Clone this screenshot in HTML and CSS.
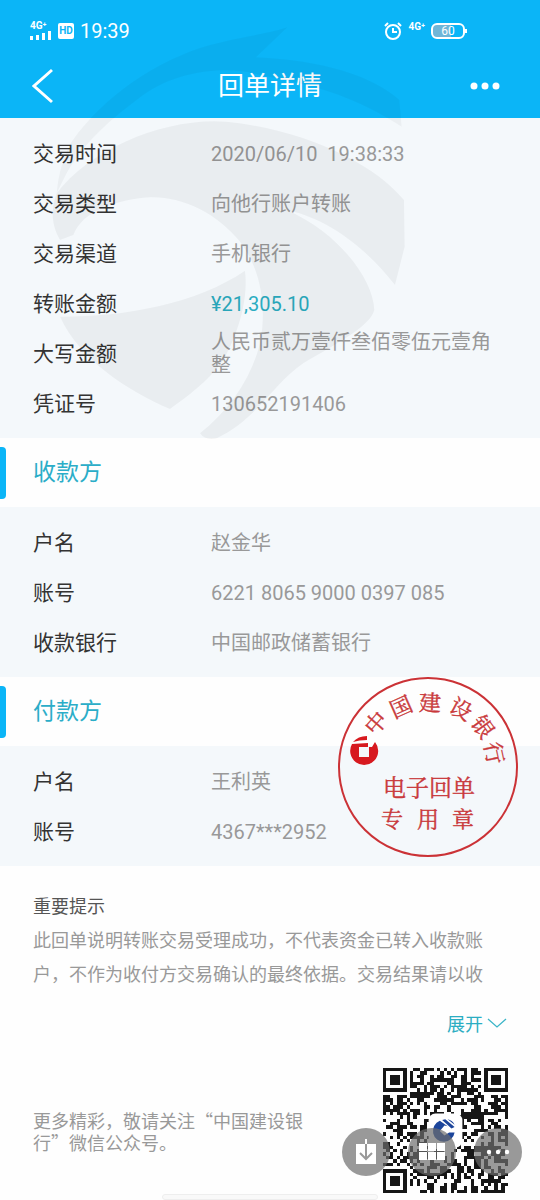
FILE: index.html
```
<!DOCTYPE html>
<html lang="zh-CN">
<head>
    <meta charset="UTF-8">
    <meta name="viewport" content="width=device-width, initial-scale=1.0">
    <title>回单详情</title>
    <link rel="stylesheet" href="styles.css">
</head>
<body>
    <div class="page">
        <header class="header">
            <div class="status">
                <div class="status-left">
                    <div class="signal">
                        <span class="net">4G⁺</span>
                        <svg width="22" height="10" viewBox="0 0 22 10" fill="#fff"><path d="M0 5h3v4H0zM6 4h3v5H6zM12 2h3v7h-3zM18 0h3v9h-3z"/></svg>
                    </div>
                    <span class="hd">HD</span>
                    <span class="time">19:39</span>
                </div>
                <div class="status-right">
                    <svg width="18" height="18" viewBox="0 0 18 18" fill="none" stroke="#fff" stroke-width="2"><circle cx="9" cy="10" r="7"/><path d="M9 6v4h4M1 4l3-3M17 4l-3-3"/></svg>
                    <span class="net">4G⁺</span>
                    <span class="battery">60</span>
                </div>
            </div>
            <nav class="nav">
                <button class="nav-btn" aria-label="返回">
                    <svg width="22" height="36" viewBox="0 0 22 36" fill="none" stroke="#fff" stroke-width="3"><path d="M20 2L2 18l18 16"/></svg>
                </button>
                <h1>回单详情</h1>
                <button class="nav-btn" aria-label="更多">
                    <svg width="30" height="8" viewBox="0 0 30 8" fill="#fff"><circle cx="4" cy="4" r="3.5"/><circle cx="15" cy="4" r="3.5"/><circle cx="26" cy="4" r="3.5"/></svg>
                </button>
            </nav>
        </header>

        <main>
            <dl class="group">
                <div class="row"><dt>交易时间</dt><dd>2020/06/10&nbsp; 19:38:33</dd></div>
                <div class="row"><dt>交易类型</dt><dd>向他行账户转账</dd></div>
                <div class="row"><dt>交易渠道</dt><dd>手机银行</dd></div>
                <div class="row"><dt>转账金额</dt><dd class="amount">¥21,305.10</dd></div>
                <div class="row"><dt>大写金额</dt><dd>人民币贰万壹仟叁佰零伍元壹角整</dd></div>
                <div class="row"><dt>凭证号</dt><dd>130652191406</dd></div>
            </dl>

            <section>
                <h2>收款方</h2>
                <dl class="group">
                    <div class="row"><dt>户名</dt><dd>赵金华</dd></div>
                    <div class="row"><dt>账号</dt><dd>6221 8065 9000 0397 085</dd></div>
                    <div class="row"><dt>收款银行</dt><dd>中国邮政储蓄银行</dd></div>
                </dl>
            </section>

            <section class="payer">
                <h2>付款方</h2>
                <dl class="group">
                    <div class="row"><dt>户名</dt><dd>王利英</dd></div>
                    <div class="row"><dt>账号</dt><dd>4367***2952</dd></div>
                </dl>
                <svg class="seal" viewBox="0 0 180 180">
                    <circle cx="90" cy="90" r="89" fill="none" stroke="#cb3236" stroke-width="2"/>
                    <g transform="translate(26 74)" fill="#d7191f">
                        <path fill-rule="evenodd" d="M-12 -7L4 -8V-4H8L11 -9A14 14 0 1 1 -12 -7ZM-5 -4V6H5V-4Z"/>
                        <path d="M-11 -9Q-6 -15 3 -15V-11Q-5 -11 -11 -9Z"/>
                    </g>
                    <g class="seal-text">
                        <text transform="translate(38 46) rotate(-49)" y="8">中</text>
                        <text transform="translate(63 30) rotate(-24)" y="8">国</text>
                        <text transform="translate(92 26) rotate(2)" y="8">建</text>
                        <text transform="translate(123 32) rotate(28)" y="8">设</text>
                        <text transform="translate(145 50) rotate(54)" y="8">银</text>
                        <text transform="translate(156 76) rotate(78)" y="8">行</text>
                        <text class="seal-big" x="91" y="119">电子回单</text>
                        <text x="54" y="150">专</text>
                        <text x="90" y="150">用</text>
                        <text x="125" y="150">章</text>
                    </g>
                </svg>
            </section>

            <section class="notice">
                <h3>重要提示</h3>
                <p>此回单说明转账交易受理成功，不代表资金已转入收款账户，不作为收付方交易确认的最终依据。交易结果请以收</p>
                <button class="expand">展开
                    <svg width="20" height="10" viewBox="0 0 20 10" fill="none" stroke="#3bb5c8" stroke-width="1.3"><path d="M1 1l9 8 9-8"/></svg>
                </button>
            </section>
        </main>

        <footer class="footer">
            <p>更多精彩，敬请关注“中国建设银行”微信公众号。</p>
            <svg class="qr" viewBox="0 0 37 37">
                <path id="qr-dots" fill="#161616" shape-rendering="crispEdges"/>
                <rect x="13.5" y="13.5" width="10" height="10" rx="2" fill="#fff"/>
                <g transform="translate(18.2 18.4) scale(.23)" fill="#1c459b">
                    <path d="M-6 -12L4 -5L0 -6L-6 1L0 7L6 3H13A14 14 0 1 1 -6 -12Z"/>
                    <path d="M-3 -13L1 -14L13 -4L9 -2ZM4 -14Q10 -13 13 -7Z"/>
                </g>
            </svg>
            <div class="float">
                <button aria-label="下载">
                    <svg width="22" height="28" viewBox="0 0 22 28"><path fill="#fff" d="M1 6h20v20H1zM10 1h2v6h-2z"/><path fill="none" stroke="#999" stroke-width="2" d="M11 6v14M5 15l6 6 6-6"/></svg>
                </button>
                <button aria-label="宫格">
                    <svg width="26" height="18" viewBox="0 0 26 18" fill="#fff"><path d="M0 0h8v8H0zM9 0h8v8H9zM18 0h8v8h-8zM0 9h8v8H0zM9 9h8v8H9zM18 9h8v8h-8z"/></svg>
                </button>
                <button aria-label="更多操作">
                    <svg width="24" height="6" viewBox="0 0 24 6" fill="#fff"><circle cx="3" cy="3" r="2.2"/><circle cx="12" cy="3" r="2.2"/><circle cx="21" cy="3" r="2.2"/></svg>
                </button>
            </div>
            <span class="home-bar"></span>
        </footer>

        <svg class="watermark" viewBox="0 0 1200 1290" fill="#000">
            <path fill-opacity=".035" d="M95 365C190 230 350 120 510 75C600 50 670 45 742 22L648 112C850 120 1000 170 1078 240L1085 320C950 235 850 200 660 165C560 135 400 150 290 240C210 300 130 370 80 460L50 520C55 460 70 410 95 365Z"/>
            <path fill-opacity=".045" d="M50 520C150 385 380 290 560 305C800 330 1000 430 1092 540L1094 680L1065 795C990 700 880 600 740 570C900 640 1000 780 1003 870C990 920 890 970 790 1030C700 1090 650 1200 530 1255Q495 1262 480 1240C580 1160 640 1060 662 960C680 850 660 745 600 665C530 580 430 530 330 532C230 540 130 570 100 645L60 660C30 610 35 560 50 520Z"/>
            <path fill-opacity=".045" d="M60 890C260 890 470 850 615 752C625 830 600 930 550 1020C500 1090 440 1130 390 1167C260 1110 120 1020 60 890Z"/>
        </svg>
    </div>
    <script src="script.js"></script>
</body>
</html>
```
FILE: styles.css
```
* {
    box-sizing: border-box;
}
body {
    margin: 0;
    background: #fefefe;
    color: #333;
    font-family: Roboto, "Noto Sans CJK SC", sans-serif;
}
h1, h2, h3, p, dl, dd {
    margin: 0;
    font-weight: 400;
}
button {
    border: none;
    background: none;
    padding: 0;
    font-family: inherit;
}
.page {
    position: relative;
    overflow: hidden;
}
.header {
    background: #0bb5f7;
    color: #fff;
    height: 118px;
}
.status {
    display: flex;
    justify-content: space-between;
    align-items: center;
    height: 62px;
    padding: 0 75px 0 30px;
}
.status-left, .status-right {
    display: flex;
    align-items: center;
    gap: 6px;
}
.signal {
    display: flex;
    flex-direction: column;
}
.net {
    font-size: 10px;
    line-height: 10px;
    font-weight: 700;
}
.status-right .net {
    padding-bottom: 8px;
}
.hd {
    background: #fff;
    color: #0bb5f7;
    font-size: 10px;
    font-weight: 700;
    line-height: 16px;
    width: 16px;
    text-align: center;
    border-radius: 2px;
}
.time {
    font-size: 20px;
}
.battery {
    position: relative;
    width: 34px;
    border: 2px solid #fff;
    border-radius: 6px;
    font-size: 12px;
    line-height: 12px;
    text-align: center;
    background: linear-gradient(to right, #6fb6d8 60%, transparent 60%);
}
.battery::after {
    content: "";
    position: absolute;
    right: -4px;
    top: 4px;
    width: 2px;
    height: 4px;
    background: #fff;
}
.nav {
    display: flex;
    justify-content: space-between;
    align-items: center;
    height: 48px;
    padding: 0 32px;
}
.nav-btn {
    display: flex;
    width: 38px;
}
h1 {
    font-size: 26px;
    line-height: 36px;
}
.group {
    background: #f4f8fb;
    padding: 11px 33px 9px;
}
.row {
    display: flex;
    align-items: center;
    height: 50px;
}
dt {
    width: 178px;
    flex: none;
    font-size: 21px;
    line-height: 23px;
}
dd {
    font-size: 20px;
    line-height: 23px;
    color: #999;
}
.amount {
    color: #2badc2;
}
h2 {
    display: flex;
    align-items: center;
    height: 69px;
    font-size: 23px;
    line-height: 23px;
    color: #2badc8;
}
h2::before {
    content: "";
    width: 6px;
    height: 52px;
    margin-right: 27px;
    background: #0bb5f7;
    border-radius: 0 4px 4px 0;
}
.payer {
    position: relative;
}
.seal {
    position: absolute;
    top: 0;
    right: 22px;
    width: 180px;
    height: 180px;
}
.seal-text {
    fill: #c9393b;
    stroke: #c9393b;
    stroke-width: .4px;
    font-family: "Noto Serif CJK SC", "Noto Sans CJK SC", serif;
    font-size: 22px;
    text-anchor: middle;
}
.seal-big {
    font-size: 23px;
}
.notice {
    padding: 22px 33px 0;
    display: flex;
    flex-direction: column;
    font-size: 18px;
    font-family: "Noto Sans CJK SC", sans-serif;
}
h3 {
    font-size: 18px;
    line-height: 34px;
    color: #555;
}
.notice p {
    padding-right: 12px;
    line-height: 34px;
    color: #999;
}
.expand {
    display: flex;
    align-items: center;
    align-self: flex-end;
    gap: 4px;
    margin-top: 16px;
    font-size: 18px;
    line-height: 34px;
    color: #2badc2;
}
.footer {
    position: relative;
    display: flex;
    justify-content: space-between;
    align-items: center;
    padding: 28px 32px 7px 33px;
    font-family: "Noto Sans CJK SC", sans-serif;
}
.footer p {
    max-width: 280px;
    font-size: 18px;
    line-height: 22px;
    color: #999;
}
.qr {
    width: 125px;
    height: 125px;
}
.float {
    position: absolute;
    right: 18px;
    bottom: 24px;
    display: flex;
    gap: 18px;
}
.float button {
    display: flex;
    align-items: center;
    justify-content: center;
    width: 48px;
    height: 48px;
    border-radius: 50%;
    background: rgba(110, 110, 110, .7);
}
.home-bar {
    position: absolute;
    left: 30%;
    right: 30%;
    bottom: 0;
    height: 6px;
    border: 1px solid #eee;
    border-radius: 3px;
    background: #f9f9f9;
}
.watermark {
    position: absolute;
    top: 20px;
    left: 40px;
    width: 400px;
    height: 430px;
    pointer-events: none;
}
```
FILE: script.js
```
const size = 37;
let seed = 20200610;
let d = '';

function random() {
    seed = (seed * 1103515245 + 12345) % 2147483648;
    return seed / 2147483648;
}

// corner squares, null outside of them
function finder(x, y) {
    const corners = [[0, 0], [size - 7, 0], [0, size - 7]];
    for (const [cx, cy] of corners) {
        const r = Math.max(Math.abs(x - cx - 3), Math.abs(y - cy - 3));
        if (r <= 4) return r !== 4 && r !== 2;
    }
    return null;
}

for (let y = 0; y < size; y++) {
    for (let x = 0; x < size; x++) {
        const corner = finder(x, y);
        const dark = random() < 0.52;
        if (corner === null ? dark : corner) {
            d += `M${x} ${y}h1v1h-1z`;
        }
    }
}
document.getElementById('qr-dots').setAttribute('d', d);
```
